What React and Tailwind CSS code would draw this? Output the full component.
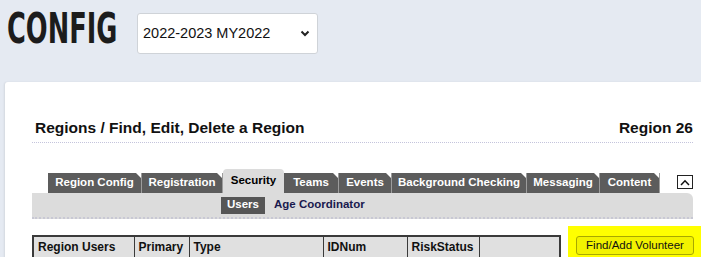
import React from "react";

const tabs = [
  { label: "Region Config", w: "w-[94px]" },
  { label: "Registration", w: "w-[81px]" },
  { label: "Security", w: "w-[61px]", active: true },
  { label: "Teams", w: "w-[55px]" },
  { label: "Events", w: "w-[53px]" },
  { label: "Background Checking", w: "w-[135px]" },
  { label: "Messaging", w: "w-[73px]" },
  { label: "Content", w: "w-[60px]" },
];

const cols = [
  { label: "Region Users", w: "w-[101px]" },
  { label: "Primary", w: "w-[55px]" },
  { label: "Type", w: "w-[134px]" },
  { label: "IDNum", w: "w-[84px]" },
  { label: "RiskStatus", w: "w-[72px]" },
  { label: "", w: "w-[81px]" },
];

function Tab({ label, w, active }) {
  if (active) {
    return (
      <div className={`${w} h-[24px] bg-[#dcdcdc] rounded-t-[4px] flex items-center justify-center text-black`}>
        {label}
      </div>
    );
  }
  return (
    <div className={`${w} relative h-[20px] bg-[#5c5c5c] border-r border-[#9c9c9c] flex items-center justify-center text-white`}>
      {label}
      <span className="absolute top-0 right-0 w-0 h-0 border-t-[5px] border-l-[5px] border-t-white border-l-transparent" />
    </div>
  );
}

export default function App() {
  return (
    <div className="min-h-screen h-screen overflow-hidden bg-[#e5eaf2] font-['Liberation_Sans',Arial,sans-serif] flex flex-col">
      {/* header */}
      <div className="flex items-start pl-[7px]">
        <div className="w-[130px] pt-[8px]">
          <span className="inline-block origin-left scale-x-[0.68] font-['DejaVu_Sans_Condensed',sans-serif] font-bold text-[42px] leading-none text-[#1c1c1c]">
            CONFIG
          </span>
        </div>
        <div className="mt-[13px] w-[181px] h-[41px] bg-white border border-[#cfd3d8] rounded-[3px] flex items-center justify-between pl-[5px] pr-[7px] text-[14.5px] text-[#111]">
          <span>2022-2023 MY2022</span>
          <svg width="10" height="7" viewBox="0 0 10 7" fill="none" stroke="#222" strokeWidth="2">
            <path d="M1.5 1.5 L5 5 L8.5 1.5" />
          </svg>
        </div>
      </div>

      {/* card */}
      <div className="flex-1 ml-[5px] mt-[28px] bg-white rounded-tl-[3px] shadow-[-1px_0_2px_rgba(0,0,0,0.08)] pl-[27px] pr-[8px] pt-[37px]">
        <div className="flex justify-between items-start pl-[3px] pb-[6px] border-b border-dotted border-[#c4c4dc] text-[15.5px] leading-[17px] font-bold text-[#111]">
          <span>Regions / Find, Edit, Delete a Region</span>
          <span>Region 26</span>
        </div>

        {/* tabs */}
        <div className="mt-[26px] flex items-end pl-[16px] text-[11.5px] font-bold">
          {tabs.map((t) => (
            <Tab key={t.label} {...t} />
          ))}
          <button className="ml-auto mb-[4px] w-[16px] h-[14px] border border-[#222] bg-white flex items-center justify-center">
            <svg width="10" height="7" viewBox="0 0 10 7" fill="none" stroke="#111" strokeWidth="1.5">
              <path d="M1 6 L5 1.8 L9 6" />
            </svg>
          </button>
        </div>
        <div className="h-[26px] bg-[#dcdcdc] rounded-tr-[6px] border-b-2 border-dotted border-[#c8c8d4] flex items-center pl-[189px] text-[11.5px] font-bold">
          <span className="h-[17px] px-[6px] bg-[#565656] text-white flex items-center">Users</span>
          <span className="ml-[9px] text-[#1a1a4e]">Age Coordinator</span>
        </div>

        {/* table + button */}
        <div className="mt-[7px] flex items-start">
          <table className="mt-[9px] border-collapse border-2 border-[#3a3a3a] text-[12px] font-bold text-[#111]">
            <thead>
              <tr className="bg-[#e0e0e0]">
                {cols.map((c, i) => (
                  <th key={i} className={`${c.w} h-[22px] border border-[#3a3a3a] text-left pl-[4px] font-bold`}>
                    {c.label}
                  </th>
                ))}
              </tr>
            </thead>
          </table>
          <div className="ml-auto -mr-[8px] w-[133px] h-[40px] bg-[#ffff00] pl-[8px] pt-[6px]">
            <button className="w-[118px] h-[19px] bg-[#f2f200] border border-[#a8a800] rounded-[3px] text-[11.5px] text-[#111] leading-none">
              Find/Add Volunteer
            </button>
          </div>
        </div>
      </div>
    </div>
  );
}
